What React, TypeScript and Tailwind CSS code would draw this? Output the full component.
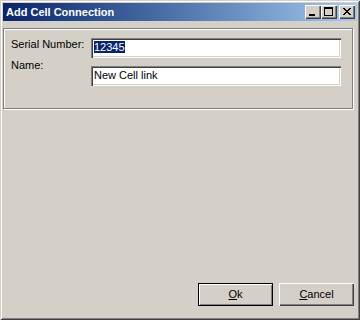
import React from "react";

function MinGlyph() {
  return (
    <svg width="16" height="14" viewBox="0 0 16 14" shapeRendering="crispEdges">
      <rect x="4" y="9" width="6" height="2" fill="#000" />
    </svg>
  );
}

function MaxGlyph() {
  return (
    <svg width="16" height="14" viewBox="0 0 16 14" shapeRendering="crispEdges">
      <rect x="3" y="2" width="9" height="2" fill="#000" />
      <rect x="3" y="2" width="1" height="9" fill="#000" />
      <rect x="11" y="2" width="1" height="9" fill="#000" />
      <rect x="3" y="10" width="9" height="1" fill="#000" />
    </svg>
  );
}

function CloseGlyph() {
  const r: [number, number, number][] = [
    [0, 0, 2], [6, 0, 2],
    [1, 1, 2], [5, 1, 2],
    [2, 2, 4],
    [3, 3, 2],
    [2, 4, 4],
    [1, 5, 2], [5, 5, 2],
    [0, 6, 2], [6, 6, 2],
  ];
  return (
    <svg width="16" height="14" viewBox="0 0 16 14" shapeRendering="crispEdges">
      {r.map(([x, y, w], i) => (
        <rect key={i} x={x + 4} y={y + 3} width={w} height="1" fill="#000" />
      ))}
    </svg>
  );
}

function CaptionButton({ children }: { children: React.ReactNode }) {
  return (
    <div className="w-[16px] h-[14px] bg-[#d4d0c8] shadow-[inset_1px_1px_0_#fff,inset_-1px_-1px_0_#404040,inset_-2px_-2px_0_#808080] flex">
      {children}
    </div>
  );
}

function TextBox({ children }: { children: React.ReactNode }) {
  return (
    <div className="w-[250px] h-[20px] bg-white pl-[3px] pt-[3px] text-[11px] leading-[13px] text-black shadow-[inset_1px_1px_0_#808080,inset_2px_2px_0_#404040,inset_-1px_-1px_0_#fff,inset_-2px_-2px_0_#d4d0c8]">
      {children}
    </div>
  );
}

export default function App() {
  return (
    <div className="w-[360px] h-[320px] bg-[#d4d0c8] p-[3px] flex flex-col font-['Liberation_Sans',Arial,sans-serif] shadow-[inset_1px_1px_0_#d4d0c8,inset_-1px_-1px_0_#404040,inset_2px_2px_0_#fff,inset_-2px_-2px_0_#808080]">
      <div className="h-[18px] flex items-center bg-gradient-to-r from-[#0a246a] to-[#a6caf0] pl-[3px] pr-[2px]">
        <span className="text-white font-bold text-[11px] leading-[13px]">Add Cell Connection</span>
        <div className="ml-auto flex items-center">
          <CaptionButton>
            <MinGlyph />
          </CaptionButton>
          <CaptionButton>
            <MaxGlyph />
          </CaptionButton>
          <div className="w-[2px]" />
          <CaptionButton>
            <CloseGlyph />
          </CaptionButton>
        </div>
      </div>
      <div className="flex-1 flex flex-col pt-[7px]">
        <div className="mr-[4px] h-[81px] border border-[#808080] shadow-[inset_1px_1px_0_#fff,1px_1px_0_#fff] pl-[7px] pt-[9px] flex flex-col text-[11px] leading-[13px] text-black">
          <div className="flex items-start">
            <div className="w-[80px]">Serial Number:</div>
            <TextBox>
              <span className="bg-[#0a246a] text-white">12345</span>
            </TextBox>
          </div>
          <div className="flex items-start mt-[1px]">
            <div className="w-[80px]">Name:</div>
            <div className="mt-[7px]">
              <TextBox>New Cell link</TextBox>
            </div>
          </div>
        </div>
        <div className="flex-1" />
        <div className="flex justify-end gap-[6px] pr-[3px] pb-[11px] text-[11px] leading-[13px] text-black">
          <div className="w-[75px] h-[23px] bg-[#d4d0c8] border border-black shadow-[inset_1px_1px_0_#fff,inset_-1px_-1px_0_#808080] flex items-center justify-center">
            <span>
              <span className="underline">O</span>k
            </span>
          </div>
          <div className="w-[75px] h-[23px] bg-[#d4d0c8] shadow-[inset_1px_1px_0_#fff,inset_-1px_-1px_0_#404040,inset_-2px_-2px_0_#808080] flex items-center justify-center">
            <span>
              <span className="underline">C</span>ancel
            </span>
          </div>
        </div>
      </div>
    </div>
  );
}
